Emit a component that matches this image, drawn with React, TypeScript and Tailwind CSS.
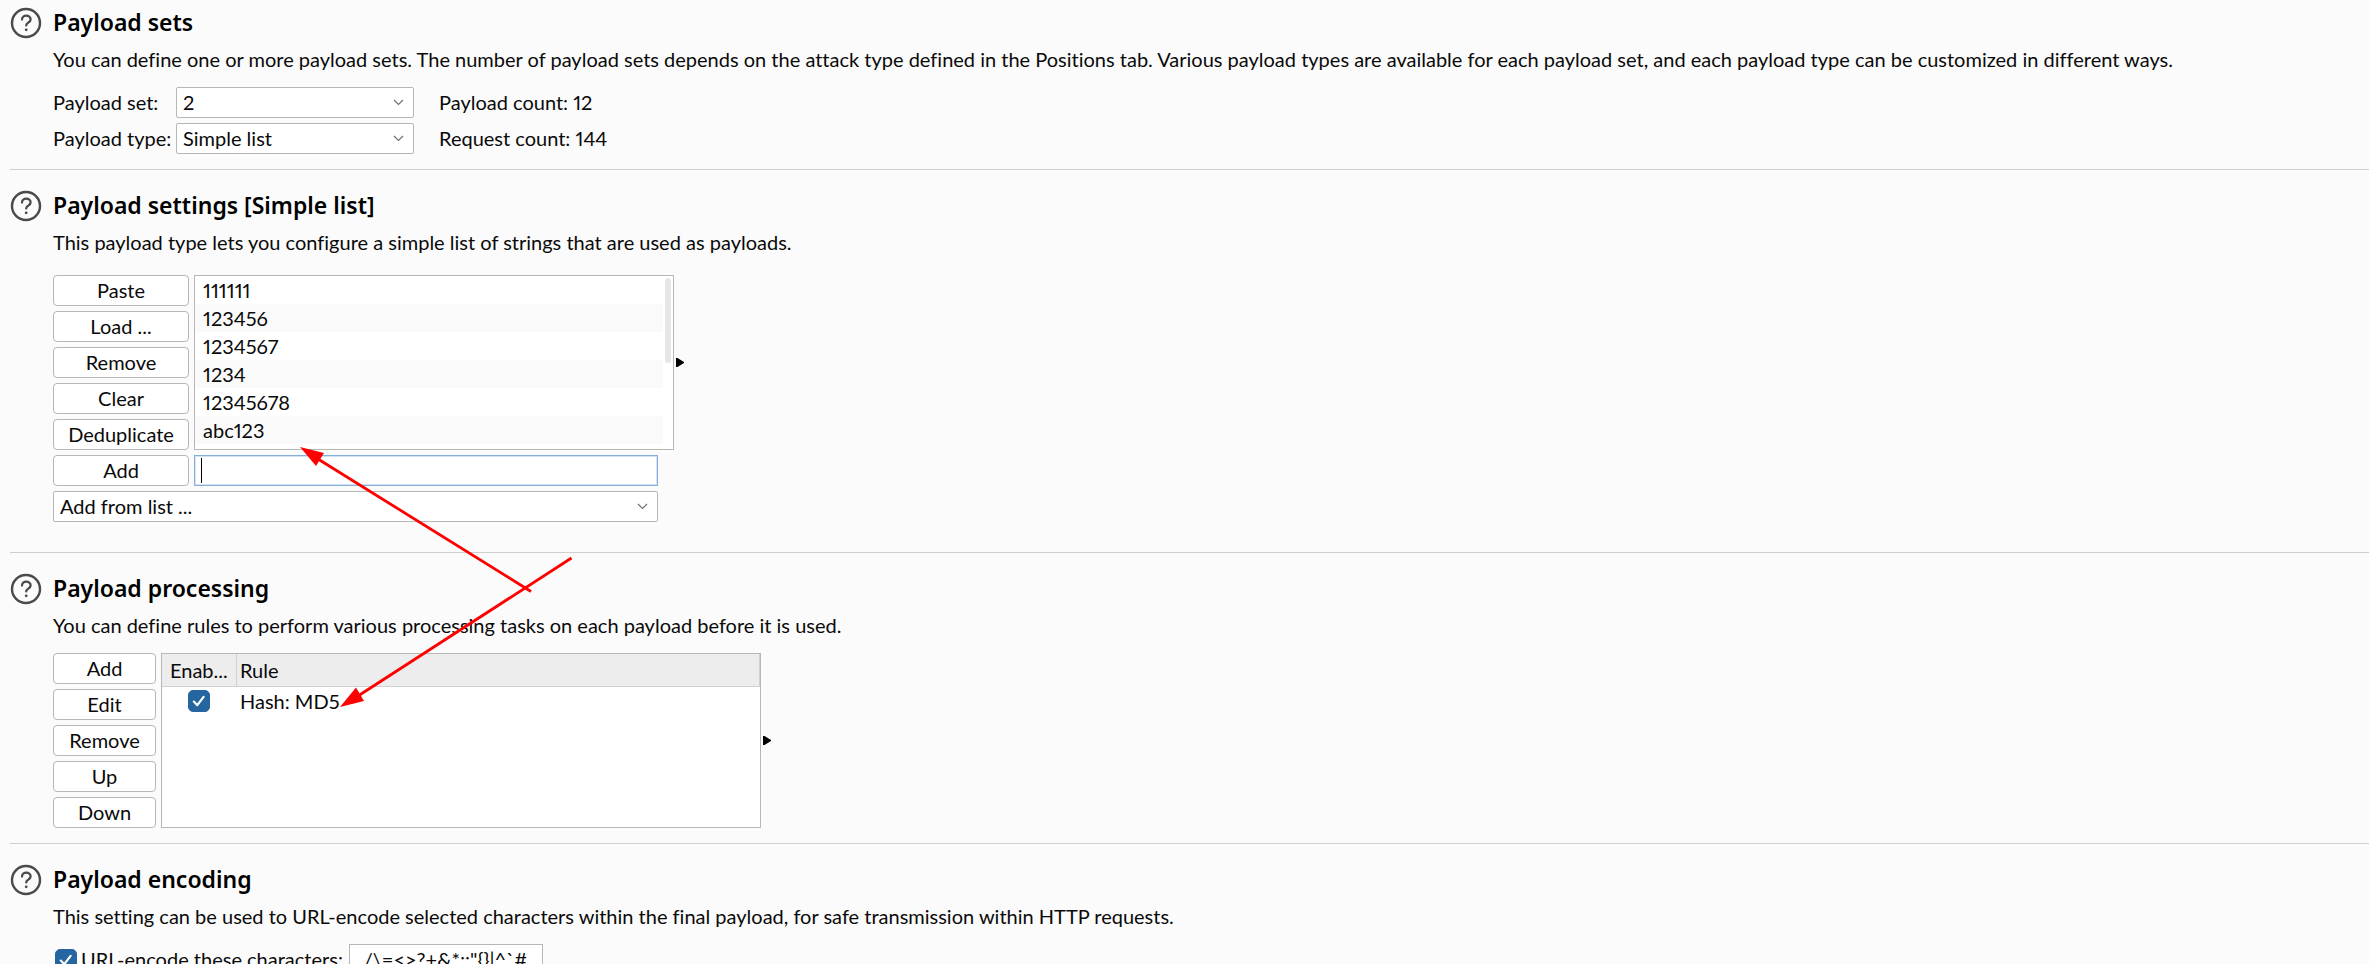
import type { ReactNode } from 'react'
import { useId } from 'react'

function HelpIcon() {
  return (
    <svg className="h-8 w-8 shrink-0" viewBox="0 0 32 32" fill="none" stroke="#4a4a4a" strokeLinecap="round">
      <circle cx="16" cy="16" r="14" strokeWidth="2.4" />
      <path d="M12 12.6 C12 7.4 20.6 7.4 20.6 12.4 C20.6 15.6 16.2 15.6 16.2 18.4" strokeWidth="2.3" />
      <circle cx="16.2" cy="22.8" r="1.4" fill="#4a4a4a" stroke="none" />
    </svg>
  )
}

type SectionProps = {
  title: string
  description: string
  first?: boolean
  contentClass?: string
  children: ReactNode
}

function Section({ title, description, first = false, contentClass = 'mt-[15px] pb-[15px]', children }: SectionProps) {
  return (
    <section className={first ? 'pt-[7px]' : 'border-t border-[#cfcfcf] pt-5'}>
      <div className="flex items-center gap-[11px]">
        <button type="button" aria-label={`Help: ${title}`} className="flex">
          <HelpIcon />
        </button>
        <h2 className="pb-[2px] font-['Noto_Sans',sans-serif] text-[23px] leading-[30px] font-semibold text-black">{title}</h2>
      </div>
      <div className="pl-[43px]">
        <p className="mt-[7px] leading-[26px]">{description}</p>
        <div className={contentClass}>{children}</div>
      </div>
    </section>
  )
}

function ActionButton({ children }: { children: ReactNode }) {
  return (
    <button
      type="button"
      className="flex h-[31px] w-full items-center justify-center rounded-[4px] border border-[#b9b6b6] bg-white pb-[2px] leading-[26px]"
    >
      {children}
    </button>
  )
}

function Dropdown({ id, label, options, className }: { id: string; label?: string; options: string[]; className: string }) {
  return (
    <div className={`relative ${className}`}>
      <select
        id={id}
        aria-label={label}
        className="h-[31px] w-full appearance-none rounded-[2px] border border-[#b9b6b6] bg-white pr-8 pb-[2px] pl-[6px] leading-[26px]"
      >
        {options.map((o) => (
          <option key={o}>{o}</option>
        ))}
      </select>
      <svg className="pointer-events-none absolute top-3 right-[10px] h-[7px] w-[11px]" viewBox="0 0 11 7" fill="none" stroke="#6e6e6e" strokeWidth="1.1">
        <path d="M1 1 L5.5 5.5 L10 1" />
      </svg>
    </div>
  )
}

function Check({ id, label }: { id?: string; label?: string }) {
  return (
    <span className="relative flex h-[22px] w-[22px] shrink-0">
      <input
        id={id}
        aria-label={label}
        type="checkbox"
        defaultChecked
        className="peer h-[22px] w-[22px] appearance-none rounded-[5px] border border-[#2565a0] bg-white checked:bg-[#2565a0]"
      />
      <svg className="pointer-events-none absolute inset-0 hidden h-[22px] w-[22px] peer-checked:block" viewBox="0 0 22 22" fill="none" stroke="#fff" strokeWidth="2.2" strokeLinecap="round" strokeLinejoin="round">
        <path d="M5.8 11.6 L9.3 15.2 L15.6 6.8" />
      </svg>
    </span>
  )
}

function Expander({ label }: { label: string }) {
  return (
    <button type="button" aria-label={label} className="ml-[2px] flex items-center">
      <svg className="h-[9px] w-2" viewBox="0 0 8 9">
        <path d="M0 0 L1.5 0 L8 4 L8 5 L1.5 9 L0 9 Z" fill="#000" />
      </svg>
    </button>
  )
}

const payloads = ['111111', '123456', '1234567', '1234', '12345678', 'abc123']
const rules = [{ name: 'Hash: MD5' }]

function Annotations() {
  return (
    <svg className="pointer-events-none absolute top-0 left-0 h-[964px] w-[800px]" viewBox="0 0 800 964" fill="#f00">
      <path d="M531 591.5 L318 459" stroke="#f00" strokeWidth="2.8" />
      <path d="M300 447 L324 453 L316 466 Z" />
      <path d="M571.5 558 L358 696" stroke="#f00" strokeWidth="2.8" />
      <path d="M340 707 L356 687.5 L364 701 Z" />
    </svg>
  )
}

export default function App() {
  const id = useId()
  return (
    <main className="relative h-screen overflow-hidden bg-[#fbfbfb] pl-[10px] font-['Lato','Noto_Sans',sans-serif] text-[20px] leading-7 text-[#0a0a0a] proportional-nums [font-variant-ligatures:none]">
      <Section
        first
        title="Payload sets"
        description="You can define one or more payload sets. The number of payload sets depends on the attack type defined in the Positions tab. Various payload types are available for each payload set, and each payload type can be customized in different ways."
      >
        <div className="grid grid-cols-[123px_238px_auto] items-center justify-start gap-y-[5px]">
          <label htmlFor={`${id}set`} className="pb-[2px]">Payload set:</label>
          <Dropdown id={`${id}set`} options={['2', '1']} className="w-full" />
          <span className="pb-[2px] pl-[25px]">Payload count: 12</span>
          <label htmlFor={`${id}type`} className="pb-[2px]">Payload type:</label>
          <Dropdown id={`${id}type`} options={['Simple list', 'Runtime file', 'Numbers']} className="w-full" />
          <span className="pb-[2px] pl-[25px]">Request count: 144</span>
        </div>
      </Section>

      <Section
        title="Payload settings [Simple list]"
        description="This payload type lets you configure a simple list of strings that are used as payloads."
        contentClass="mt-5 pb-[30px]"
      >
        <div className="flex flex-col gap-[5px]">
          <div className="flex">
            <div className="flex w-[136px] flex-col gap-[5px]">
              {['Paste', 'Load ...', 'Remove', 'Clear', 'Deduplicate'].map((b) => (
                <ActionButton key={b}>{b}</ActionButton>
              ))}
            </div>
            <div className="ml-[5px] flex w-[480px] justify-between border border-[#b9b6b6] bg-white">
              <ul className="grow">
                {payloads.map((p) => (
                  <li key={p} className="h-7 pl-2 leading-7 even:bg-[#fafafa]">
                    {p}
                  </li>
                ))}
              </ul>
              <div className="mt-[2px] mr-[2px] ml-[2px] h-[85px] w-[6px] rounded-full bg-[#e6e6e6]" />
            </div>
            <Expander label="Resize payload list" />
          </div>
          <div className="flex">
            <div className="w-[136px]">
              <ActionButton>Add</ActionButton>
            </div>
            <div className="relative ml-[5px] w-[464px]">
              <input
                aria-label="New payload"
                className="h-[31px] w-full border border-[#87afda] bg-white px-2 ring-1 ring-[#d3e3f5] outline-none ring-inset"
              />
              <span className="absolute top-[3px] left-[7px] h-[25px] w-px bg-black" />
            </div>
          </div>
          <Dropdown id={`${id}add`} label="Add from list" options={['Add from list ...']} className="w-[605px]" />
        </div>
      </Section>

      <Section
        title="Payload processing"
        description="You can define rules to perform various processing tasks on each payload before it is used."
      >
        <div className="flex">
          <div className="flex w-[103px] flex-col gap-[5px]">
            {['Add', 'Edit', 'Remove', 'Up', 'Down'].map((b) => (
              <ActionButton key={b}>{b}</ActionButton>
            ))}
          </div>
          <div className="ml-[5px] w-[600px] border border-[#b9b6b6] bg-white">
            <table className="w-full table-fixed border-separate border-spacing-0">
              <thead>
                <tr className="h-[33px] bg-[#ededed] text-left">
                  <th className="w-[75px] border-r border-b border-[#d0d0d0] pl-2 font-normal whitespace-nowrap">Enab...</th>
                  <th className="border-r border-b border-[#d0d0d0] pl-[3px] font-normal">Rule</th>
                </tr>
              </thead>
              <tbody>
                {rules.map((r) => (
                  <tr key={r.name} className="h-7">
                    <td className="pl-[26px]">
                      <Check label={`Enable ${r.name}`} />
                    </td>
                    <td className="pl-[3px]">{r.name}</td>
                  </tr>
                ))}
              </tbody>
            </table>
          </div>
          <Expander label="Resize rules table" />
        </div>
      </Section>

      <Section
        title="Payload encoding"
        description="This setting can be used to URL-encode selected characters within the final payload, for safe transmission within HTTP requests."
      >
        <div className="flex items-center">
          <label htmlFor={`${id}enc`} className="flex w-[296px] items-center gap-1 pl-[2px] whitespace-nowrap">
            <Check id={`${id}enc`} />
            <span className="pb-[2px]">URL-encode these characters:</span>
          </label>
          <input
            aria-label="Characters to encode"
            defaultValue={'./\\=<>?+&*;:"{}|^`#'}
            className="h-[31px] w-[194px] border border-[#b9b6b6] bg-white px-[9px] pb-[2px] leading-[26px]"
          />
        </div>
      </Section>

      <Annotations />
    </main>
  )
}
